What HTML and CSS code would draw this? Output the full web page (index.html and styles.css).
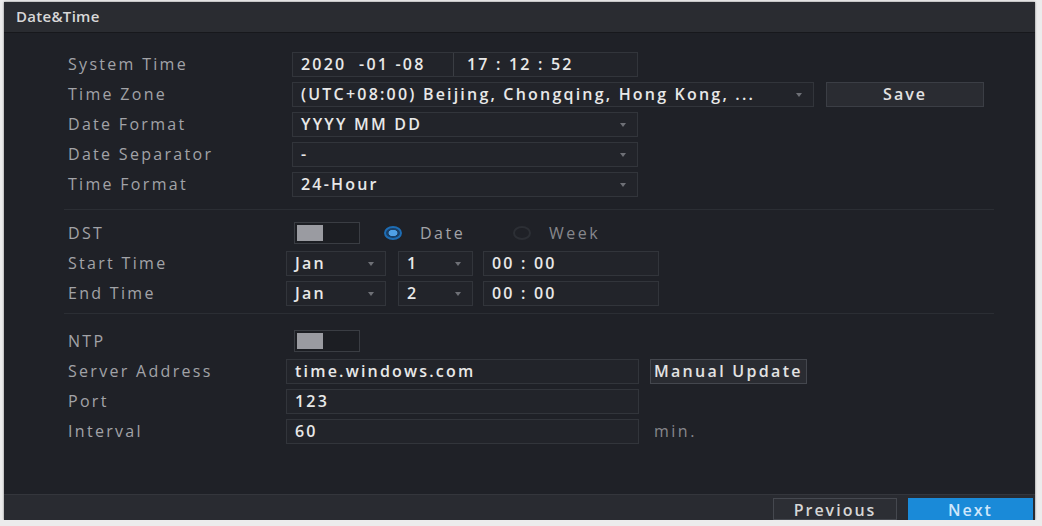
FILE: index.html
```html
<!DOCTYPE html>
<html>
<head>
    <title>Date&amp;Time</title>
    <link rel="stylesheet" href="styles.css">
</head>
<body>
    <div class="panel">
        <div class="title">Date&amp;Time</div>

        <div class="content">
            <div class="group">
                <div class="row">
                    <span class="label">System Time</span>
                    <div class="field wide datetime">
                        <span class="part">2020&nbsp;&nbsp;-01&nbsp;-08</span>
                        <span class="part split">17&nbsp;:&nbsp;12&nbsp;:&nbsp;52</span>
                    </div>
                </div>
                <div class="row">
                    <span class="label">Time Zone</span>
                    <div class="field zone select">(UTC+08:00) Beijing, Chongqing, Hong Kong, ...<i class="arrow"></i></div>
                    <button class="btn save">Save</button>
                </div>
                <div class="row">
                    <span class="label">Date Format</span>
                    <div class="field wide select">YYYY MM DD<i class="arrow"></i></div>
                </div>
                <div class="row">
                    <span class="label">Date Separator</span>
                    <div class="field wide select">-<i class="arrow"></i></div>
                </div>
                <div class="row">
                    <span class="label">Time Format</span>
                    <div class="field wide select">24-Hour<i class="arrow"></i></div>
                </div>
            </div>

            <div class="divider first"></div>

            <div class="group">
                <div class="row">
                    <span class="label">DST</span>
                    <div class="toggle"><span class="knob"></span></div>
                    <label class="radio on"><span class="dot"></span>Date</label>
                    <label class="radio"><span class="dot"></span>Week</label>
                </div>
                <div class="row">
                    <span class="label">Start Time</span>
                    <div class="field month select">Jan<i class="arrow"></i></div>
                    <div class="field day select">1<i class="arrow"></i></div>
                    <div class="field clock">00&nbsp;:&nbsp;00</div>
                </div>
                <div class="row">
                    <span class="label">End Time</span>
                    <div class="field month select">Jan<i class="arrow"></i></div>
                    <div class="field day select">2<i class="arrow"></i></div>
                    <div class="field clock">00&nbsp;:&nbsp;00</div>
                </div>
            </div>

            <div class="divider second"></div>

            <div class="group">
                <div class="row">
                    <span class="label">NTP</span>
                    <div class="toggle"><span class="knob"></span></div>
                </div>
                <div class="row">
                    <span class="label">Server Address</span>
                    <div class="field ntp">time.windows.com</div>
                    <button class="btn manual">Manual Update</button>
                </div>
                <div class="row">
                    <span class="label">Port</span>
                    <div class="field ntp">123</div>
                </div>
                <div class="row">
                    <span class="label">Interval</span>
                    <div class="field ntp">60</div>
                    <span class="unit">min.</span>
                </div>
            </div>
        </div>

        <div class="footer">
            <button class="btn prev">Previous</button>
            <button class="btn next">Next</button>
        </div>
    </div>
</body>
</html>
```

FILE: styles.css
```css
body {
    margin: 0;
    background: #ececec;
    font-family: "Open Sans", "DejaVu Sans", sans-serif;
}

.panel {
    margin: 2px 7px 0 4px;
    height: 518px;
    background: #1f2127;
    display: flex;
    flex-direction: column;
    box-shadow: 0 0 2px #777;
}

.title {
    height: 30px;
    line-height: 28px;
    padding-left: 12px;
    background: #2a2c31;
    border-bottom: 1px solid #17181c;
    color: #d8d8d8;
    font-size: 15px;
    font-weight: 600;
    letter-spacing: 0.3px;
}

.content {
    flex: 1;
    padding: 16px 0 0 64px;
}

.row {
    height: 30px;
    display: flex;
    align-items: center;
}

.label {
    width: 218px;
    flex-shrink: 0;
    color: #a2a3a7;
    font-size: 16px;
    letter-spacing: 2.3px;
}

.field {
    box-sizing: border-box;
    height: 25px;
    line-height: 23px;
    border: 1px solid #32353b;
    background: #22242a;
    color: #e8e8e8;
    font-size: 16px;
    font-weight: 600;
    letter-spacing: 2.2px;
    padding: 0 8px;
    position: relative;
    white-space: nowrap;
    overflow: hidden;
}

.select .arrow {
    position: absolute;
    right: 11px;
    top: 10px;
    border-left: 3px solid transparent;
    border-right: 3px solid transparent;
    border-top: 4px solid #6e7076;
}

.wide {
    width: 346px;
    margin-left: 6px;
}

.zone {
    width: 522px;
    margin-left: 6px;
}

.datetime {
    display: flex;
    padding: 0;
}

.datetime .part {
    padding: 0 8px;
}

.datetime .part:first-child {
    width: 160px;
    box-sizing: border-box;
}

.datetime .split {
    border-left: 1px solid #3a3d43;
    padding-left: 13px;
}

.btn {
    font-family: inherit;
    font-size: 16px;
    font-weight: 600;
    letter-spacing: 2px;
    color: #e2e2e2;
    background: #2a2c32;
    border: 1px solid #3b3e45;
    height: 25px;
    padding: 0;
}

.save {
    width: 158px;
    margin-left: 12px;
}

.toggle {
    box-sizing: border-box;
    width: 66px;
    height: 22px;
    margin-left: 8px;
    border: 1px solid #3a3d43;
    background: #1c1e23;
    padding: 2px;
}

.knob {
    display: block;
    width: 26px;
    height: 16px;
    background: #9a9ba1;
}

.radio {
    display: flex;
    align-items: center;
    color: #a2a3a7;
    font-size: 16px;
    letter-spacing: 2.5px;
}

.radio .dot {
    box-sizing: border-box;
    width: 18px;
    height: 14px;
    border-radius: 50%;
    border: 2px solid #2c2f35;
    margin-right: 18px;
}

.radio.on {
    width: 129px;
    margin-left: 24px;
}

.radio.on .dot {
    border-color: #1d6db5;
    background: radial-gradient(ellipse at center, #4fa0e6 0 42%, #1a3f66 48% 100%);
}

.radio:last-child {
    color: #86878c;
}

.month {
    width: 100px;
}

.day {
    width: 75px;
    margin-left: 12px;
}

.clock {
    width: 176px;
    margin-left: 10px;
}

.divider {
    height: 1px;
    background: #2b2e34;
    margin-left: -4px;
    width: 930px;
}

.divider.first {
    margin-top: 10px;
    margin-bottom: 8px;
}

.divider.second {
    margin-top: 5px;
    margin-bottom: 12px;
}

.ntp {
    width: 353px;
}

.manual {
    width: 157px;
    margin-left: 11px;
    border-color: #44474e;
    text-align: left;
    padding-left: 3px;
    letter-spacing: 2.3px;
}

.unit {
    margin-left: 15px;
    color: #86878c;
    font-size: 16px;
    letter-spacing: 2.5px;
}

.footer {
    height: 25px;
    background: #292b31;
    border-top: 1px solid #34363c;
    display: flex;
    justify-content: flex-end;
    align-items: flex-end;
    padding-right: 2px;
}

.prev {
    width: 124px;
    height: 22px;
    background: #2c2e34;
    border-color: #45484f;
    color: #d6d6d6;
}

.next {
    width: 125px;
    height: 22px;
    margin-left: 11px;
    background: #1a8ad8;
    border-color: #1a8ad8;
    color: #cfe6fb;
}
```
